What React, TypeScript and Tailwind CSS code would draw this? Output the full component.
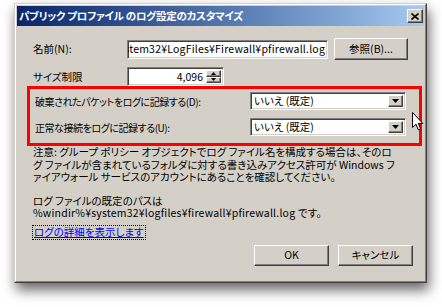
import React from "react";

const raised =
  "border border-t-white border-l-white border-r-[#404040] border-b-[#404040] shadow-[inset_-1px_-1px_0_#808080] bg-[#d4d0c8]";
const sunken =
  "border border-t-[#808080] border-l-[#808080] border-r-white border-b-white shadow-[inset_1px_1px_0_#404040,inset_-1px_-1px_0_#d4d0c8]";

function DownArrow() {
  return (
    <svg width="7" height="4" viewBox="0 0 7 4">
      <polygon points="0,0 7,0 3.5,4" fill="#000" />
    </svg>
  );
}

function Combo() {
  return (
    <div className={`${sunken} w-[156px] h-[18px] bg-white flex items-stretch p-[2px]`}>
      <div className="flex-1 flex items-center pl-[1px] leading-none whitespace-nowrap">いいえ (既定)</div>
      <div className={`${raised} w-[15px] flex items-center justify-center`}>
        <DownArrow />
      </div>
    </div>
  );
}

function Button({ children, w }: { children: React.ReactNode; w: string }) {
  return (
    <div className={`${raised} ${w} h-[21px] flex items-center justify-center leading-none whitespace-nowrap`}>
      {children}
    </div>
  );
}

export default function App() {
  return (
    <div className="relative w-[442px] h-[307px] bg-white overflow-hidden font-['Noto_Sans_CJK_JP',sans-serif] text-[10.5px] text-black [font-feature-settings:'palt']">
      <div className="ml-[14px] mt-[3px] w-[413px] h-[280px] bg-[#d4d0c8] border border-t-[#d4d0c8] border-l-[#d4d0c8] border-r-[#404040] border-b-[#404040] shadow-[2px_7px_12px_rgba(0,0,0,0.6)]">
        <div className="h-full border border-t-white border-l-white border-r-[#808080] border-b-[#808080] p-[1px] flex flex-col">
          {/* title bar */}
          <div className="h-[20px] flex items-center bg-gradient-to-r from-[#0a246a] to-[#a6caf0] pl-[2px] pr-[1px]">
            <div className="flex-1 text-white font-bold text-[10.5px] leading-none whitespace-nowrap tracking-[-0.25px]">
              パブリック プロファイル のログ設定のカスタマイズ
            </div>
            <div className={`${raised} w-[16px] h-[14px] flex items-center justify-center`}>
              <svg width="8" height="7" viewBox="0 0 8 7">
                <path d="M0.5 0.5 L7.5 6.5 M7.5 0.5 L0.5 6.5" stroke="#000" strokeWidth="1.6" />
              </svg>
            </div>
          </div>

          {/* content */}
          <div className="flex-1 flex flex-col pl-[10px]">
            {/* name row */}
            <div className="mt-[12px] pl-[6px] h-[22px] flex items-center">
              <div className="w-[94px] whitespace-nowrap">名前(N):</div>
              <div className={`${sunken} w-[201px] h-[19px] bg-white flex items-center justify-end overflow-hidden px-[2px] whitespace-nowrap`}>
                <span className="shrink-0 tracking-[0.2px]">%systemroot%¥system32¥LogFiles¥Firewall¥pfirewall.log</span>
              </div>
              <div className="ml-[6px]">
                <div className={`${raised} w-[74px] h-[22px] flex items-center justify-center whitespace-nowrap`}>
                  参照(B)...
                </div>
              </div>
            </div>

            {/* size row */}
            <div className="mt-[7px] pl-[6px] h-[19px] flex items-center">
              <div className="w-[94px] whitespace-nowrap">サイズ制限</div>
              <div className={`${sunken} w-[97px] h-[19px] bg-white flex items-stretch p-[2px]`}>
                <div className="flex-1 flex items-center justify-end pr-[3px]">4,096</div>
                <div className="w-[15px] flex flex-col">
                  <div className={`${raised} flex-1 flex items-center justify-center`}>
                    <svg width="5" height="3" viewBox="0 0 5 3">
                      <polygon points="0,3 5,3 2.5,0" fill="#000" />
                    </svg>
                  </div>
                  <div className={`${raised} flex-1 flex items-center justify-center`}>
                    <svg width="5" height="3" viewBox="0 0 5 3">
                      <polygon points="0,0 5,0 2.5,3" fill="#000" />
                    </svg>
                  </div>
                </div>
              </div>
            </div>

            {/* highlighted box */}
            <div className="w-[395px] h-[60px] border-[3px] border-[#ff0000] flex flex-col pl-[5px]">
              <div className="mt-[3px] h-[18px] flex items-center">
                <div className="w-[215px] whitespace-nowrap text-[10px] tracking-[-0.45px]">破棄されたパケットをログに記録する(D):</div>
                <Combo />
              </div>
              <div className="mt-[8px] h-[18px] flex items-center">
                <div className="w-[215px] whitespace-nowrap text-[10px] tracking-[-0.45px]">正常な接続をログに記録する(U):</div>
                <Combo />
              </div>
            </div>

            {/* note */}
            <div className="pl-[6px] leading-[12.5px] whitespace-nowrap">
              <div>注意: グループ ポリシー オブジェクトでログ ファイル名を構成する場合は、そのロ</div>
              <div>グ ファイルが含まれているフォルダに対する書き込みアクセス許可が Windows フ</div>
              <div>ァイアウォール サービスのアカウントにあることを確認してください。</div>
            </div>

            <div className="mt-[11.5px] pl-[6px] leading-[12px] whitespace-nowrap">
              <div>ログ ファイルの既定のパスは</div>
              <div className="tracking-[0.2px]">%windir%¥system32¥logfiles¥firewall¥pfirewall.log です。</div>
            </div>

            <div className="mt-[6px] pl-[5px] flex">
              <div className="border border-dotted border-black px-[1px] h-[15px] flex items-center leading-none">
                <span className="text-[#0000ff] underline whitespace-nowrap">ログの詳細を表示します</span>
              </div>
            </div>

            {/* buttons */}
            <div className="mt-[5px] flex justify-end pr-[11px] gap-[9px]">
              <Button w="w-[75px]">OK</Button>
              <Button w="w-[75px]">キャンセル</Button>
            </div>
          </div>
        </div>
      </div>

      {/* mouse cursor */}
      <svg className="absolute left-[412px] top-[112px]" width="12" height="19" viewBox="0 0 12 19">
        <path d="M0.5 0.5 L0.5 15.5 L4 12.2 L6.3 17.8 L8.6 16.8 L6.3 11.4 L10.8 11.4 Z" fill="#fff" stroke="#000" strokeWidth="1" />
      </svg>
    </div>
  );
}
